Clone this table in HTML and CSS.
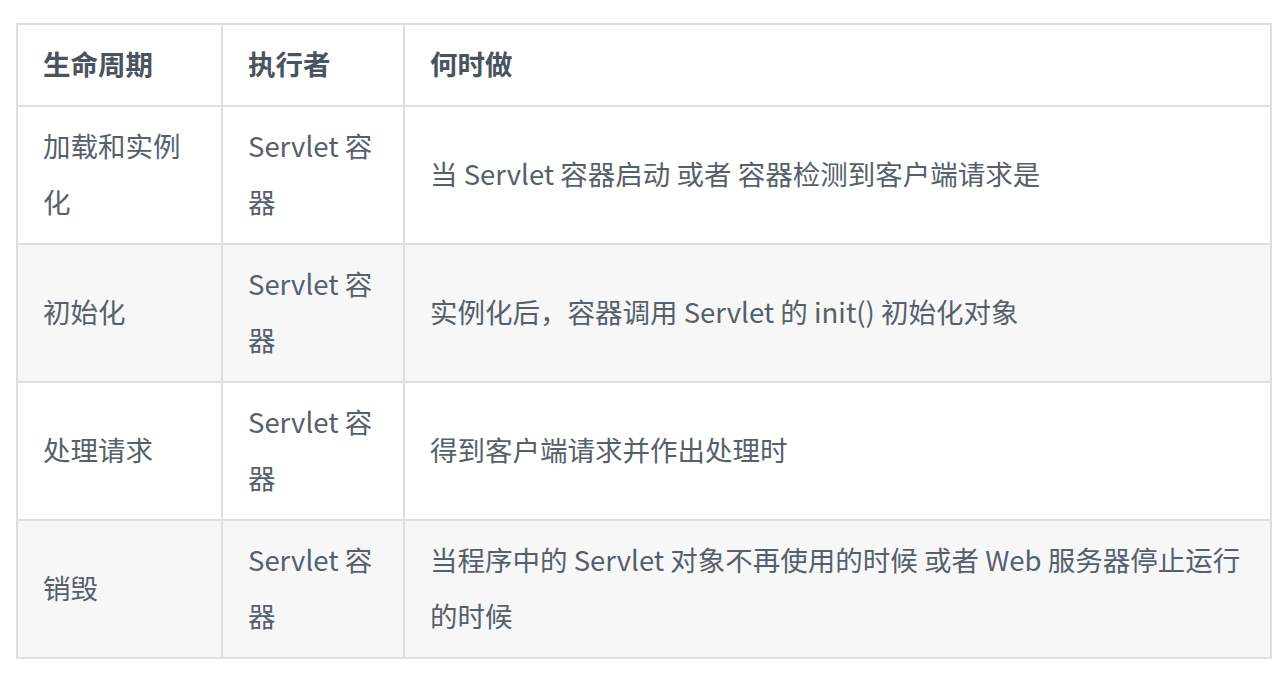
FILE: index.html
```html
<!DOCTYPE html>
<html lang="zh-CN">
<head>
<meta charset="utf-8">
<link rel="stylesheet" href="styles.css">
</head>
<body>
<div class="page">
<table class="lifecycle">
<colgroup><col class="c1"><col class="c2"><col class="c3"></colgroup>
<thead>
<tr><th>生命周期</th><th>执行者</th><th>何时做</th></tr>
</thead>
<tbody>
<tr><td>加载和实例化</td><td>Servlet 容器</td><td>当 Servlet 容器启动 或者 容器检测到客户端请求是</td></tr>
<tr><td>初始化</td><td>Servlet 容器</td><td>实例化后，容器调用 Servlet 的 init() 初始化对象</td></tr>
<tr><td>处理请求</td><td>Servlet 容器</td><td>得到客户端请求并作出处理时</td></tr>
<tr><td>销毁</td><td>Servlet 容器</td><td>当程序中的 Servlet 对象不再使用的时候 或者 Web 服务器停止运行的时候</td></tr>
</tbody>
</table>
</div>
</body>
</html>
```
FILE: styles.css
```css
html, body {
  margin: 0;
  padding: 0;
  background: #ffffff;
}
.page {
  padding: 23px 16px 0 16px;
}
.lifecycle {
  width: 1256px;
  table-layout: fixed;
  border-collapse: collapse;
  font-family: "Noto Sans CJK SC", "Noto Sans", sans-serif;
  font-size: 27.5px;
  line-height: 56px;
  color: #56606b;
}
.c1 { width: 205px; }
.c2 { width: 182px; }
.c3 { width: auto; }
.lifecycle th,
.lifecycle td {
  border: 2px solid #dfdfdf;
  padding: 10px 25px 14px 25px;
  text-align: left;
  vertical-align: middle;
}
.lifecycle th {
  font-weight: 700;
  color: #4a545e;
}
.lifecycle tbody tr:nth-child(even) {
  background: #f7f7f7;
}
```
